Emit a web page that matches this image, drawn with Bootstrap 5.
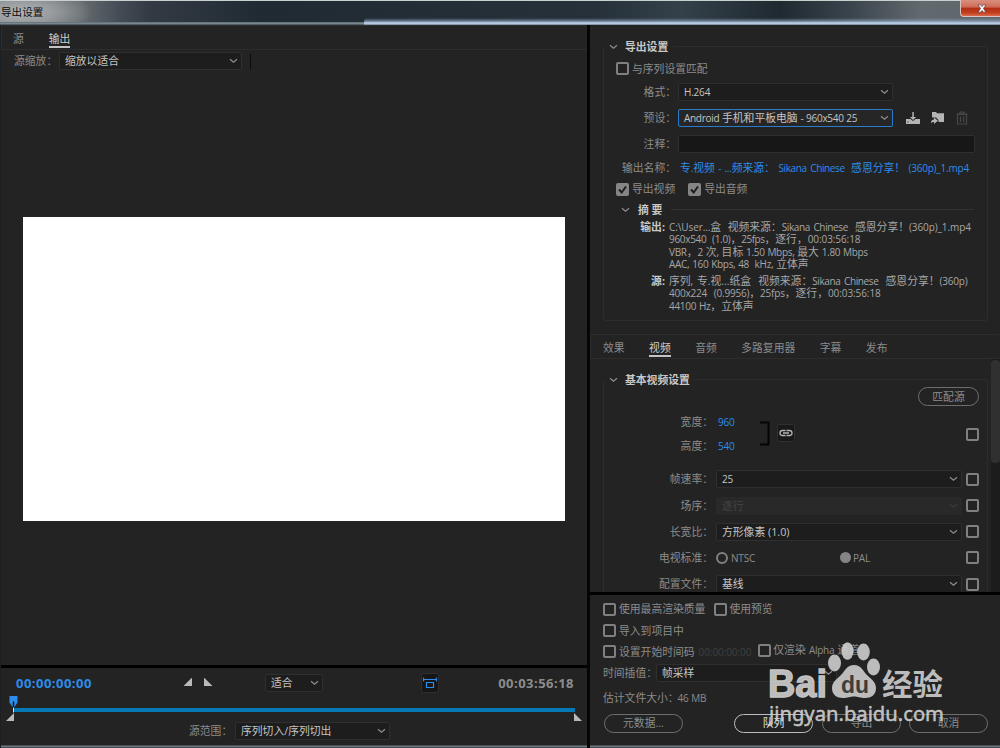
<!DOCTYPE html>
<html lang="zh-CN">
<head>
<meta charset="utf-8">
<title>导出设置</title>
<link href="https://cdn.jsdelivr.net/npm/bootstrap@5.3.0/dist/css/bootstrap.min.css" rel="stylesheet">
<style>
body{width:1000px;height:748px;overflow:hidden;background:#232323;color:#8c8c8c;font:10.8px/12px "Open Sans","Noto Sans CJK SC",sans-serif}
span,b{white-space:pre}
i{font-style:normal;font-size:10px;letter-spacing:-.2px;word-spacing:.9px}
.sk{letter-spacing:-.37px;word-spacing:1.3px}
.tight{letter-spacing:-.3px;word-spacing:.5px}
.tc{letter-spacing:-.08px}
.titlebar{height:25px;border-top:1px solid #c9d0d0;background:radial-gradient(ellipse 70px 24px at 22px 11px,#b0b3b4 0,#979b9d 45%,transparent 100%),linear-gradient(90deg,#72777b 0,#666c70 8%,#434c55 12%,#323b44 15%,#2b343c 20%,#1f2a32 26%,#26313a 60%,#35414a 68%,#1e2930 78%,#3a444c 85%,#62696e 92%,#5f666c 100%);color:#0c0c0c;padding:5px 0 0 1px;flex:none}
.titlebar span{font-size:10.6px}
.edge{position:absolute;left:0;right:0;top:21px;height:3px;background:linear-gradient(#5e6b74,#7e8c93 60%,#333c42)}
.glow{position:absolute;left:364px;right:0;top:17px;height:7px;background:linear-gradient(#8da5c200,#8da5c2aa 45%,#c3d8ee 75%,#6e7f8d);border-radius:4px 0 0 0}
.closebtn{position:absolute;right:0;top:-1px;width:40px;height:17px;border:1px solid #d9c4bf;border-top:0;border-right:0;border-radius:0 0 0 4px;background:linear-gradient(#d9907f,#cf6a55 45%,#b12d14 50%,#c2401f 80%,#d96a4c);padding-left:3px}
.main{height:723px}
.leftpane{width:587px;border-left:1px solid #1a2024}
.rightpane{width:410px}
.vsplit{width:3px;background:#050505}
.hsplit{height:3px;background:#000;flex:none}
.bottomedge{height:3px;background:linear-gradient(#333b40,#6d787f 50%,#2d353a)}
.panelbar{border:1px solid #2d2d2d;border-width:1px 0 1px 1px;border-radius:2px;height:25px}
.tabitem{position:relative}
.tabitem.on{color:#cdcdcd}
.tabitem.on::after{content:"";position:absolute;left:0;right:0;bottom:-3px;height:2px;background:#c4c4c4}
.lt{padding:2px 0 0 11px;gap:25px}
.rt{padding:2px 0 0 12px;gap:24.500px}
.rw{display:flex;align-items:center;flex:none}
.sel{display:flex;align-items:center;justify-content:space-between;height:18px;border:1px solid #2f2f2f;border-radius:2px;background:#1d1d1d;color:#c4c4c4;padding:0 3px 0 5px;flex:none}
.chev{width:9px;height:6px;fill:none;stroke:#8f8f8f;stroke-width:1.2;flex:none}
.sel.off{background:#292929;border-color:#292929;color:#444}
.sel.off .chev{stroke:#3c3c3c}
.sel.hot{border-color:#2a7bcb;background:#262626}
.cb{width:13px;height:13px;border:2px solid #808080;border-radius:2px;flex:none}
.cb.ck{background:#858585;border:0}
.cb svg{display:block;width:13px;height:13px;fill:none;stroke:#1e1e1e;stroke-width:2}
.grp{border:1px solid #2d2d2d;border-radius:3px;width:385px;margin-left:13px;flex:none}
.lgd{height:20px;margin-top:-10px;color:#c8c8c8;font-weight:700}
.lgd>div{background:#232323;gap:7px;padding:0 5px}
.lab1{width:72px;text-align:right;flex:none;margin-right:2px}
.lab2{width:109px;text-align:right;flex:none;margin-right:3px}
.blue{color:#2d8ceb}
.pill{height:19px;border:1px solid #6e6e6e;border-radius:10px;display:flex;align-items:center;justify-content:center;flex:none}
.dl1{padding-left:35px;gap:4px;height:12.25px;color:#a6a6a6}
.dl1 b{width:26px;text-align:right;color:#c8c8c8}
.scroller{height:233px;overflow:hidden;padding-top:20px;width:401px}
.sbar{width:9px;background:#1c1c1c}
.sbar div{width:9px;height:103px;border-radius:4px;background:#303030;margin-top:1px}
.radio{width:12px;height:12px;border-radius:50%;border:2px solid #808080;flex:none}
.radio.on{background:#858585;border:0}
.preview{width:542px;height:304px;background:#fff;margin:145px 0 0 22px;flex:none}
.bigtc{font-size:13px;line-height:16px;letter-spacing:.48px}
.track{height:4px;background:#0578b5;width:561px;margin-left:13px}
.wm{position:absolute;left:760px;top:636px;width:190px;height:94px}
.w183{width:183px}.w58{width:58px}.w155{width:155px}.w214{width:215px}.w246{width:246px}.w181{width:181px}
</style>
</head>
<body>
<div class="titlebar position-relative"><div class="edge"></div><div class="glow"></div><span class="position-relative">导出设置</span>
<div class="closebtn d-flex justify-content-center align-items-center"><svg width="10" height="9" viewBox="0 0 10 9"><path d="M1 .8h2.600L5 2.600 6.400 .8H9L6.400 4.500 9 8.200H6.400L5 6.400 3.600 8.200H1L3.600 4.500z" fill="#fff" stroke="#5c4040" stroke-width=".7"/></svg></div></div>
<div class="main d-flex">
<div class="leftpane d-flex flex-column">
  <div class="panelbar rw lt"><span class="tabitem">源</span><span class="tabitem on">输出</span></div>
  <div class="rw" style="height:22px;padding-left:13px"><span style="width:45px">源缩放：</span><div class="sel w183"><span>缩放以适合</span><svg class="chev" viewBox="0 0 9 6"><path d="M1 1.200l3.500 3 3.500-3"/></svg></div><div style="width:1px;height:15px;background:#0b0b0b;margin-left:8px"></div></div>
  <div class="preview"></div>
  <div class="flex-grow-1"></div>
  <div class="hsplit"></div>
  <div class="rw" style="height:29px;padding:1px 13px 0 15px">
    <b class="blue bigtc" style="width:168px">00:00:00:00</b>
    <svg width="30" height="10" viewBox="0 0 30 10" fill="#b9b9b9"><path d="M8.500 .5v8.500H0zM20.500 .5v8.500h8.500z" transform="translate(-.5 -1)"/></svg>
    <div class="sel w58" style="margin-left:51px"><span>适合</span><svg class="chev" viewBox="0 0 9 6"><path d="M1 1.200l3.500 3 3.500-3"/></svg></div>
    <svg width="18" height="20" viewBox="0 0 18 20" style="margin-left:98px"><rect x=".5" y=".5" width="17" height="19" rx="2" fill="#161616" stroke="#303030"/><path d="M2.500 6.500h13M5.500 9.500h7v5h-7z" fill="none" stroke="#2d8ceb" stroke-width="1.200"/><path d="M2 4v5l2-2.500zM16 4v5l-2-2.500z" fill="#2d8ceb"/></svg>
    <b class="bigtc ms-auto">00:03:56:18</b>
  </div>
  <div class="position-relative" style="height:25px;padding-top:11px"><div class="track"></div>
    <svg class="position-absolute" style="left:4px;top:-2px" width="577" height="27" viewBox="0 0 577 27"><path d="M4.500 1h8v6.500L9.500 12h-2L4.500 7.500z" fill="#2d8ceb"/><path d="M8.500 6.500v6" stroke="#111" stroke-width="1.500"/><path d="M8.500 12.500v5" stroke="#ddd"/><path d="M9 18v8H1z M569 18v8h8z" fill="#b9b9b9"/></svg></div>
  <div class="rw" style="height:23px;padding:0 0 5px 188px"><span style="width:46px">源范围：</span><div class="sel w155"><span>序列切入/序列切出</span><svg class="chev" viewBox="0 0 9 6"><path d="M1 1.200l3.500 3 3.500-3"/></svg></div></div>
  <div class="bottomedge"></div>
</div>
<div class="vsplit"></div>
<div class="rightpane d-flex flex-column">
  <div style="height:309px;padding-top:21px">
  <div class="grp" style="height:275px">
    <div class="lgd rw"><div class="rw"><svg class="chev" viewBox="0 0 9 6"><path d="M1 1.200l3.500 3 3.500-3"/></svg><span>导出设置</span></div></div>
    <div class="rw" style="height:23px;padding-left:12px;gap:3px"><div class="cb"></div><span>与序列设置匹配</span></div>
    <div class="rw" style="height:23px"><span class="lab1">格式：</span><div class="sel w214"><i>H.264</i><svg class="chev" viewBox="0 0 9 6"><path d="M1 1.200l3.500 3 3.500-3"/></svg></div></div>
    <div class="rw" style="height:30px"><span class="lab1">预设：</span><div class="sel w214 hot"><span><i class="tight">Android </i>手机和平板电脑<i class="tight"> - 960x540 25</i></span><svg class="chev" viewBox="0 0 9 6"><path d="M1 1.200l3.500 3 3.500-3"/></svg></div>
      <svg width="66" height="16" viewBox="0 0 66 16" style="margin-left:13px"><g fill="#b4b4b4"><path d="M0 9h4.500l2.500 2 2.500-2H14v5H0z"/><path d="M6.300 2h1.500v5h2.400L7 10 3.900 7h2.400z"/><path d="M26 2h4l1 1.200h7v8.800H32.500V10L30 7.500H26z"/><path d="M25 13.500c0-3 1-4 3-4V7.500l4 3.200-4 3.200v-2c-1.500 0-2.200.3-3 1.600z"/></g><path d="M1.500 12h1" stroke="#222"/><path d="M51.500 4.500h9v9.500h-9zM50.500 4h11M54 3.500v-1.300h4v1.300M54.500 6.500v5.500M57.500 6.500v5.500" fill="none" stroke="#484848" stroke-width="1.200"/></svg></div>
    <div class="rw" style="height:22px"><span class="lab1">注释：</span><div class="sel" style="width:297px;background:#171717"></div></div>
    <div class="rw" style="height:25px"><span class="lab1" style="margin-right:4px">输出名称：</span><span class="blue">专<i>.</i>视频<i> - ...</i>频来源：<i class="sk"> Sikana Chinese </i> 感恩分享！<i> (360p)_1.mp4</i></span></div>
    <div class="rw" style="height:18px;padding-left:12px;gap:3px"><div class="cb ck"><svg viewBox="0 0 13 13"><path d="M3 6.500l2.700 3L10 3.500"/></svg></div><span>导出视频</span><div class="cb ck" style="margin-left:10px"><svg viewBox="0 0 13 13"><path d="M3 6.500l2.700 3L10 3.500"/></svg></div><span>导出音频</span></div>
    <div class="rw" style="height:23px;padding:0 13px 0 17px"><svg class="chev" viewBox="0 0 9 6"><path d="M1 1.200l3.500 3 3.500-3"/></svg><b style="color:#c8c8c8;margin:0 9px 0 8px">摘 要</b><div class="flex-grow-1" style="height:1px;background:#333"></div></div>
    <div class="rw dl1"><b>输出:</b><span><i style="letter-spacing:-.1px">C:\User...</i>盒<i>  </i>视频来源：<i class="sk">Sikana Chinese  </i>感恩分享！<i style="letter-spacing:-.1px">(360p)_1.mp4</i></span></div>
    <div class="rw dl1"><b></b><span><i class="tight">960x540  (1.0)</i>，<i style="letter-spacing:-.5px">25fps</i>，逐行，<i class="tc">00:03:56:18</i></span></div>
    <div class="rw dl1"><b></b><span><i class="tight">VBR</i>，<i class="tight">2 </i>次<i class="tight">, </i>目标<i class="tight"> 1.50 Mbps, </i>最大<i class="tight"> 1.80 Mbps</i></span></div>
    <div class="rw dl1"><b></b><span><i class="tight">AAC, 160 Kbps, 48  kHz, </i>立体声</span></div>
    <div class="rw dl1" style="margin-top:5px"><b>源:</b><span>序列<i style="letter-spacing:.1px">, </i>专<i style="letter-spacing:.1px">.</i>视<i style="letter-spacing:.1px">...</i>纸盒<i style="letter-spacing:.1px">  </i>视频来源：<i class="sk">Sikana Chinese  </i>感恩分享！<i>(360p)</i></span></div>
    <div class="rw dl1"><b></b><span><i>400x224  (0.9956)</i>，<i>25fps</i>，逐行，<i class="tc">00:03:56:18</i></span></div>
    <div class="rw dl1"><b></b><span><i class="tight">44100 Hz</i>，立体声</span></div>
  </div></div>
  <div class="panelbar rw rt"><span class="tabitem">效果</span><span class="tabitem on">视频</span><span class="tabitem">音频</span><span class="tabitem">多路复用器</span><span class="tabitem">字幕</span><span class="tabitem">发布</span></div>
  <div class="d-flex" style="height:233px;flex:none"><div class="scroller">
  <div class="grp" style="height:240px">
    <div class="lgd rw"><div class="rw"><svg class="chev" viewBox="0 0 9 6"><path d="M1 1.200l3.500 3 3.500-3"/></svg><span>基本视频设置</span></div></div>
    <div class="d-flex justify-content-end" style="height:17px;padding-right:8px;margin-top:-3px"><div class="pill" style="width:61px">匹配源</div></div>
    <div class="rw" style="height:62px;padding:0 8px 2px 0">
      <div class="d-flex flex-column" style="gap:12px"><div class="rw"><span class="lab2">宽度：</span><i class="blue" style="margin-left:2px">960</i></div><div class="rw"><span class="lab2">高度：</span><i class="blue" style="margin-left:2px">540</i></div></div>
      <svg width="10" height="26" viewBox="0 0 10 26" style="margin-left:25px"><path d="M0 1.500h8.500v22H0" fill="none" stroke="#050505" stroke-width="2"/></svg>
      <svg width="18" height="18" viewBox="0 0 18 18" style="margin:0 0 3px 7px"><rect x=".5" y=".5" width="17" height="17" rx="2" fill="#191919" stroke="#303030"/><path d="M8.500 6.500h-3a2.500 2.500 0 0 0 0 5h3M9.500 6.500h3a2.500 2.500 0 0 1 0 5h-3M6 9h6" fill="none" stroke="#b4b4b4" stroke-width="1.300"/></svg>
      <div class="cb ms-auto"></div></div>
    <div class="rw" style="height:26.400px;padding-right:8px"><span class="lab2">帧速率：</span><div class="sel w246"><i>25</i><svg class="chev" viewBox="0 0 9 6"><path d="M1 1.200l3.500 3 3.500-3"/></svg></div><div class="cb ms-auto"></div></div>
    <div class="rw" style="height:26.400px;padding-right:8px"><span class="lab2">场序：</span><div class="sel w246 off"><span>逐行</span><svg class="chev" viewBox="0 0 9 6"><path d="M1 1.200l3.500 3 3.500-3"/></svg></div><div class="cb ms-auto"></div></div>
    <div class="rw" style="height:26px;padding-right:8px"><span class="lab2">长宽比：</span><div class="sel w246"><span>方形像素 (1.0)</span><svg class="chev" viewBox="0 0 9 6"><path d="M1 1.200l3.500 3 3.500-3"/></svg></div><div class="cb ms-auto"></div></div>
    <div class="rw" style="height:26.400px;padding-right:8px"><span class="lab2">电视标准：</span><div class="radio"></div><i style="width:112px;padding-left:3px">NTSC</i><div class="radio on" style="width:11px;height:11px"></div><i style="padding-left:2px">PAL</i><div class="cb ms-auto"></div></div>
    <div class="rw" style="height:26px;padding-right:8px"><span class="lab2">配置文件：</span><div class="sel w246"><span>基线</span><svg class="chev" viewBox="0 0 9 6"><path d="M1 1.200l3.500 3 3.500-3"/></svg></div><div class="cb ms-auto"></div></div>
  </div></div><div class="sbar"><div></div></div></div>
  <div class="hsplit"></div>
  <div class="flex-grow-1" style="padding:3px 12px 0 13px">
    <div class="rw" style="height:22px;gap:3px"><div class="cb"></div><span>使用最高渲染质量</span><div class="cb" style="margin-left:6px"></div><span style="margin-left:-1px">使用预览</span></div>
    <div class="rw" style="height:21px;gap:3px"><div class="cb"></div><span>导入到项目中</span></div>
    <div class="rw" style="height:21px;gap:3px"><div class="cb"></div><span>设置开始时间码</span><i class="tc" style="color:#404040;margin-left:1px">00:00:00:00</i><div class="cb" style="margin:-3px 0 0 4px"></div><span style="margin:-3px 0 0 -1px">仅渲染<i style="letter-spacing:-.3px;word-spacing:1px"> Alpha </i>通道</span></div>
    <div class="rw" style="height:22px"><span style="width:53px">时间插值：</span><div class="sel w181"><span>帧采样</span><svg class="chev" viewBox="0 0 9 6"><path d="M1 1.200l3.500 3 3.500-3"/></svg></div></div>
    <div class="rw" style="height:28px"><span>估计文件大小：<i class="tight" style="margin-left:-1px">46 MB</i></span></div>
    <div class="rw" style="height:22px;margin-left:1px"><div class="pill" style="width:79px">元数据...</div><div class="pill" style="width:79px;margin-left:51px;border-color:#bdbdbd;color:#e4e4e4">队列</div><div class="pill" style="width:79px;margin-left:9px">导出</div><div class="pill" style="width:79px;margin-left:8px">取消</div></div>
  </div>
  <div class="bottomedge"></div>
</div></div>
<svg class="wm" viewBox="760 636 190 94" fill="#d2d2d2" fill-opacity=".88">
  <text x="768" y="696.500" font-family="Liberation Sans, sans-serif" font-weight="700" font-size="39" textLength="59" lengthAdjust="spacingAndGlyphs" stroke="#c4c4c4" stroke-width="1.400">Bai</text>
  <ellipse cx="834.500" cy="663" rx="6.500" ry="8.500"/><ellipse cx="847.500" cy="651" rx="6" ry="8.800"/><ellipse cx="863.500" cy="652" rx="6.300" ry="8.500"/><ellipse cx="873.500" cy="667" rx="6.500" ry="8.500"/>
  <path d="M854 665c7 0 9 6 13 10s9 7 9 13c0 7-5 10-11 10-5 0-7-1.500-11-1.500s-6 1.500-11 1.500c-6 0-11-3-11-10 0-6 5-9 9-13s6-10 13-10z"/>
  <text x="841" y="693" font-family="Liberation Sans, sans-serif" font-weight="700" font-size="24" textLength="28" lengthAdjust="spacingAndGlyphs" fill="#2b2b2b">du</text>
  <text x="882" y="695" font-family="Noto Sans CJK SC, sans-serif" font-weight="700" font-size="30" textLength="61" lengthAdjust="spacingAndGlyphs">经验</text>
  <text x="769" y="721" font-family="Noto Sans, sans-serif" font-weight="400" font-size="19.500" textLength="175" lengthAdjust="spacingAndGlyphs" stroke="#d2d2d2" stroke-width=".4">jingyan.baidu.com</text>
</svg>
</body>
</html>
